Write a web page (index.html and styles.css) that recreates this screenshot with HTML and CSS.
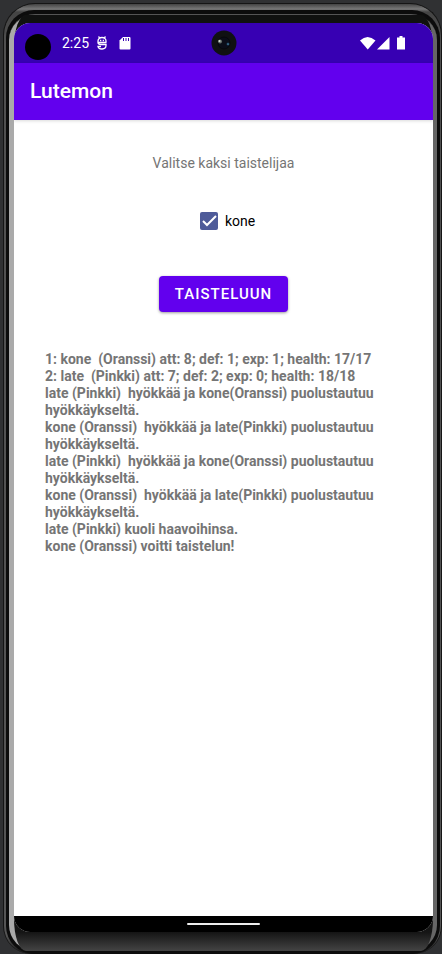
FILE: index.html
```html
<!DOCTYPE html>
<html lang="fi">
<head>
<meta charset="utf-8">
<meta name="viewport" content="width=device-width, initial-scale=1">
<title>Lutemon</title>
<link rel="stylesheet" href="styles.css">
</head>
<body>
<div class="phone">
  <div class="edge">
    <div class="rail">
      <div class="face">
        <div class="screen">
          <div class="status">
            <span class="cutout"></span>
            <span class="clock">2:25</span>
            <svg class="debug" width="10" height="14" viewBox="0 0 10 14" fill="none" stroke="#fff" stroke-width="1.300" aria-hidden="true">
              <path d="M1 6.500V5a4 3.500 0 0 1 8 0v1.500M1.500 .5l1.500 1.800M8.500 .5L7 2.300M.5 6.500h9M1 6.500q0 2 3 2h5v1c0 4.500-7.500 4.500-8 1h3"/>
              <path d="M3 4.500h1.300M5.700 4.500h1.300"/>
            </svg>
            <svg class="card" width="12" height="14" viewBox="0 0 12 14" aria-hidden="true">
              <path fill="#fff" d="M4 1h6.500q1 0 1 1v10.500q0 1-1 1h-9q-1 0-1-1V4.500z"/>
              <path stroke="#3700b3" d="M4.500 2v3M7 2v3M9.500 2v3"/>
            </svg>
            <svg class="camera" width="26" height="26" viewBox="0 0 26 26" aria-hidden="true">
              <circle cx="13" cy="13" r="12.500" fill="#101113"/>
              <circle cx="13" cy="13" r="6" fill="#0b0d18" stroke="#07080c"/>
              <circle cx="9" cy="11.500" r="2" fill="#66706c"/>
              <circle cx="8.500" cy="11" r="1" fill="#d5ddd2"/>
              <circle cx="17" cy="14" r="1.500" fill="#153957"/>
              <circle cx="17" cy="14" r=".6" fill="#8ed3e8"/>
            </svg>
            <span class="signals">
              <svg width="16" height="14" viewBox="0 0 16 14" aria-hidden="true"><path fill="#fff" d="M0 4.500Q7.500-2.500 15.500 4.500L7.750 13.500z"/></svg>
              <svg width="13" height="14" viewBox="0 0 13 14" aria-hidden="true"><path fill="#fff" d="M0 13.500L12.500 1v12.500z"/></svg>
              <svg class="battery" width="8" height="14" viewBox="0 0 8 14" aria-hidden="true"><path fill="#fff" d="M2.500 0h3v1.500H8V13.500H0V1.500h2.500z"/></svg>
            </span>
          </div>
          <header class="appbar"><h1>Lutemon</h1></header>
          <main>
            <p class="prompt">Valitse kaksi taistelijaa</p>
            <label class="choice"><input type="checkbox" checked><span>kone</span></label>
            <button class="fight" type="button">TAISTELUUN</button>
            <p class="log">1: kone  (Oranssi) att: 8; def: 1; exp: 1; health: 17/17
2: late  (Pinkki) att: 7; def: 2; exp: 0; health: 18/18
late (Pinkki)  hyökkää ja kone(Oranssi) puolustautuu hyökkäykseltä.
kone (Oranssi)  hyökkää ja late(Pinkki) puolustautuu hyökkäykseltä.
late (Pinkki)  hyökkää ja kone(Oranssi) puolustautuu hyökkäykseltä.
kone (Oranssi)  hyökkää ja late(Pinkki) puolustautuu hyökkäykseltä.
late (Pinkki) kuoli haavoihinsa.
kone (Oranssi) voitti taistelun!</p>
          </main>
          <div class="nav"><span></span></div>
        </div>
      </div>
    </div>
  </div>
</div>
</body>
</html>
```
FILE: styles.css
```css
* { box-sizing: border-box; }

body {
  margin: 0;
  min-height: 100vh;
  display: flex;
  background: #303133;
  font-family: Roboto, sans-serif;
}

/* Device frame, from the outside in */
.phone, .edge, .rail, .face, .screen {
  flex: 1;
  min-width: 0;
  display: flex;
}

.phone {
  margin: 3px 0 0 3px;
  padding: 0 1px 0 2px;
  border: 1px solid #151515;
  border-bottom-width: 0;
  border-radius: 32px 32px 28px 28px;
  background: linear-gradient(#444 0, #777 5px, #444 8px, #505050 40px, #555 98%, #151515);
}

.edge {
  margin-top: 6px;
  padding: 4px 3px 3px;
  border-radius: 28px;
  background: #0c0c0c;
}

.rail {
  border-radius: 26px;
  padding: 0 4px 0 5px;
  border-top: 1px solid #555;
  background: linear-gradient(90deg, #aaa 50%, #666 50%);
}

.face {
  padding: 8px 0 19px;
  border-radius: 12px / 32px;
  background: linear-gradient(#101110 95%, #151515 98%, #444);
}

.screen {
  flex-direction: column;
  overflow: hidden;
  border-radius: 16px;
  background: #fff;
}

.status {
  position: relative;
  display: flex;
  align-items: center;
  height: 40px;
  padding: 0 28px 0 11px;
  background: #3700b3;
  color: #fff;
}

.cutout {
  width: 26px;
  height: 26px;
  margin-top: 8px;
  border-radius: 50%;
  background: #000;
}

.clock {
  margin-left: 11px;
  font-size: 14px;
  line-height: 20px;
}

.debug { margin-left: 8px; }
.card { margin-left: 12px; }

.camera {
  position: absolute;
  left: 50%;
  top: 50%;
  transform: translate(-50%, -50%);
}

.signals {
  display: flex;
  margin-left: auto;
  gap: 1px;
}

.battery { margin-left: 6px; }

.appbar {
  position: relative;
  padding: 16px;
  background: #6200ee;
  color: #fff;
  box-shadow: 0 1px 3px rgba(0, 0, 0, .15);
}

h1 {
  margin: 0;
  font-size: 21px;
  font-weight: 500;
  line-height: 25px;
}

main {
  flex: 1;
  display: flex;
  flex-direction: column;
  align-items: center;
  padding: 33px 31px;
  background: #fff;
}

.prompt {
  margin: 0;
  color: #757575;
  font-size: 14px;
  line-height: 20px;
}

.choice {
  display: flex;
  align-items: center;
  gap: 7px;
  margin-top: 38px;
  padding-left: 8px;
  font-size: 14px;
  line-height: 20px;
  color: #000;
}

.choice input {
  appearance: none;
  width: 18px;
  height: 18px;
  margin: 0;
  border: 2px solid #757575;
  border-radius: 2px;
}

.choice input:checked {
  border: 0;
  background: #4e5b99 url("data:image/svg+xml,%3Csvg xmlns='http://www.w3.org/2000/svg' viewBox='0 0 18 18'%3E%3Cpath d='M3 9l4 4 9-9' fill='none' stroke='white' stroke-width='2'/%3E%3C/svg%3E");
}

.fight {
  height: 36px;
  margin-top: 45px;
  padding: 0 16px;
  border: 0;
  border-radius: 4px;
  background: #6200ee;
  color: #fff;
  font: 500 15px/20px Roboto, sans-serif;
  letter-spacing: 1px;
  box-shadow: 0 1px 3px rgba(0, 0, 0, .4);
}

.log {
  align-self: stretch;
  margin: 39px 0 0;
  color: #757575;
  font-size: 14px;
  font-weight: 700;
  line-height: 17px;
  white-space: pre-wrap;
}

.nav {
  display: flex;
  justify-content: center;
  align-items: center;
  height: 16px;
  background: #000;
}

.nav span {
  width: 73px;
  height: 2px;
  border-radius: 1px;
  background: #eee;
}
```
